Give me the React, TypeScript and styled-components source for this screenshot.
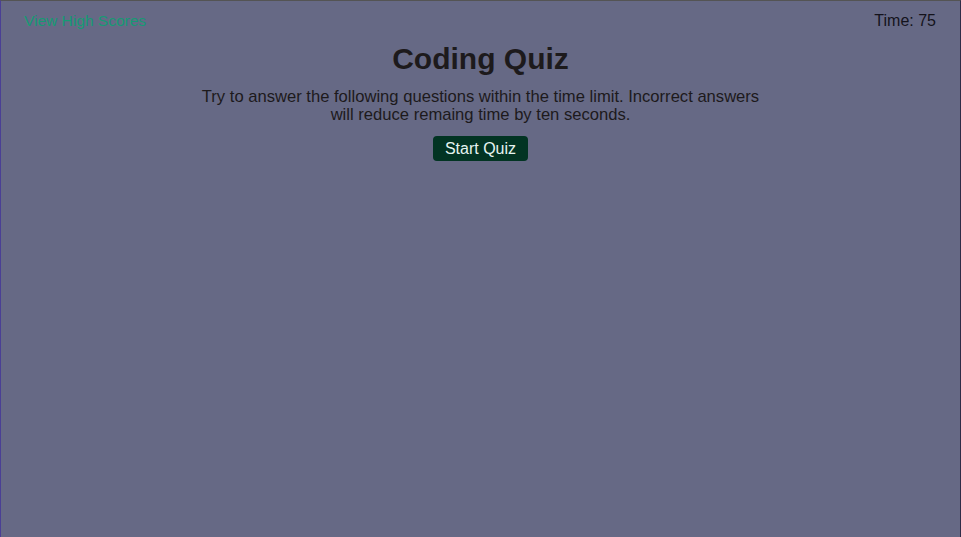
import * as React from "react";
import styled, { createGlobalStyle } from "styled-components";

const GlobalStyle = createGlobalStyle`
  html, body {
    margin: 0;
    padding: 0;
    height: 100%;
  }
  body {
    background: #666985;
    font-family: "Liberation Sans", Arial, sans-serif;
  }
`;

const Page = styled.div`
  box-sizing: border-box;
  min-height: 100vh;
  background: #666985;
  border-top: 1px solid #545454;
  border-left: 1px solid #4a3f95;
  border-right: 1px solid #2f2c48;
  display: flex;
  flex-direction: column;
  align-items: center;
`;

const TopBar = styled.header`
  align-self: stretch;
  display: flex;
  justify-content: space-between;
  align-items: center;
  padding: 10px 24px 0 23px;
  font-size: 16px;
  line-height: 20px;
`;

const ScoresLink = styled.a`
  color: #159a74;
  font-size: 15.5px;
  text-decoration: none;
  cursor: pointer;
`;

const Timer = styled.span`
  color: #14131c;
`;

const Title = styled.h1`
  margin: 9px 0 0;
  font-size: 30px;
  line-height: 38px;
  font-weight: bold;
  color: #1d1a1c;
`;

const Intro = styled.p`
  margin: 10px 0 0;
  max-width: 568px;
  text-align: center;
  font-size: 16.6px;
  line-height: 18px;
  color: #1d1a1c;
`;

const StartButton = styled.button`
  margin-top: 12px;
  height: 25px;
  padding: 0 12px;
  border: none;
  border-radius: 4px;
  background: #023423;
  color: #e6f4f1;
  font-family: "Liberation Sans", Arial, sans-serif;
  font-size: 16px;
  cursor: pointer;
`;

const App: React.FC = () => {
  const [time] = React.useState(75);

  return (
    <>
      <GlobalStyle />
      <Page>
        <TopBar>
          <ScoresLink>View High Scores</ScoresLink>
          <Timer>Time: {time}</Timer>
        </TopBar>
        <Title>Coding Quiz</Title>
        <Intro>
          Try to answer the following questions within the time limit. Incorrect answers
          will reduce remaing time by ten seconds.
        </Intro>
        <StartButton>Start Quiz</StartButton>
      </Page>
    </>
  );
};

export default App;
